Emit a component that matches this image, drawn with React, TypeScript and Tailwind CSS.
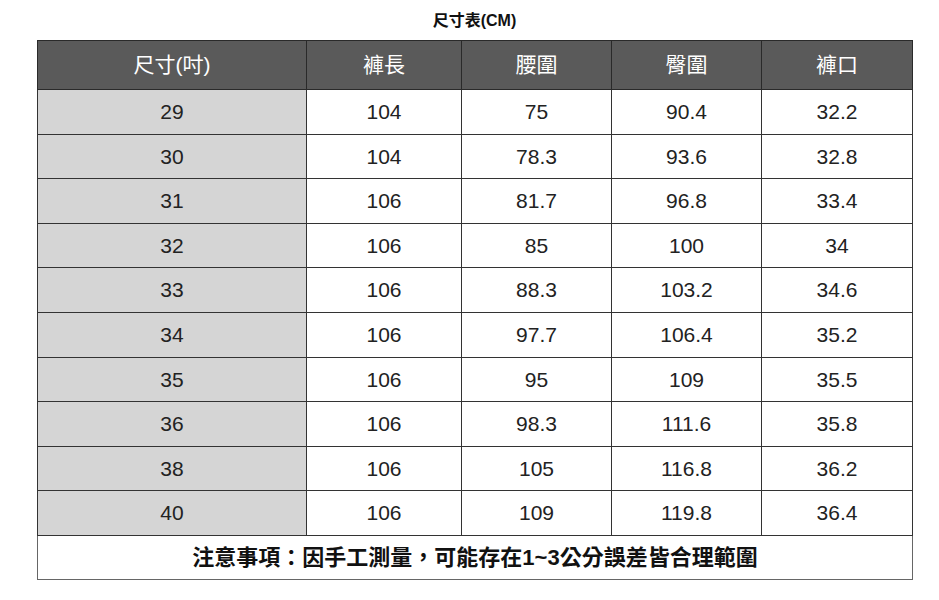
import React from 'react';

const headers = ['尺寸(吋)', '褲長', '腰圍', '臀圍', '褲口'];

const rows: string[][] = [
  ['29', '104', '75', '90.4', '32.2'],
  ['30', '104', '78.3', '93.6', '32.8'],
  ['31', '106', '81.7', '96.8', '33.4'],
  ['32', '106', '85', '100', '34'],
  ['33', '106', '88.3', '103.2', '34.6'],
  ['34', '106', '97.7', '106.4', '35.2'],
  ['35', '106', '95', '109', '35.5'],
  ['36', '106', '98.3', '111.6', '35.8'],
  ['38', '106', '105', '116.8', '36.2'],
  ['40', '106', '109', '119.8', '36.4'],
];

const App: React.FC = () => {
  return (
    <div
      lang="zh-TW"
      className="w-[939px] h-[600px] bg-white font-['Liberation_Sans','Noto_Sans_CJK_TC',sans-serif] text-[#222]"
    >
      <div className="ml-[37px] w-[875px]">
        <div className="h-[40px] flex items-center justify-center pt-[2px] text-[16px] font-bold text-[#111]">
          尺寸表(CM)
        </div>
        <table className="w-[875px] table-fixed border-collapse border border-[#666]">
          <colgroup>
            <col className="w-[269px]" />
            <col className="w-[155px]" />
            <col className="w-[150px]" />
            <col className="w-[150px]" />
            <col className="w-[151px]" />
          </colgroup>
          <thead>
            <tr className="h-[49px] bg-[#5a5a5a]">
              {headers.map((h) => (
                <th key={h} className="border border-[#2a2a2a] text-white text-[21px] font-normal text-center p-0">
                  {h}
                </th>
              ))}
            </tr>
          </thead>
          <tbody>
            {rows.map((r, i) => (
              <tr key={r[0]} className="h-[44.6px]">
                {r.map((c, j) => (
                  <td
                    key={j}
                    className={`border border-[#333] text-center text-[21px] p-0 ${j === 0 ? 'bg-[#d5d5d5]' : 'bg-white'}`}
                  >
                    {c}
                  </td>
                ))}
              </tr>
            ))}
            <tr className="h-[44px]">
              <td colSpan={5} className="border border-[#666] text-center text-[22px] font-bold text-[#111] p-0">
                注意事項：因手工測量，可能存在1~3公分誤差皆合理範圍
              </td>
            </tr>
          </tbody>
        </table>
      </div>
    </div>
  );
};

export default App;
